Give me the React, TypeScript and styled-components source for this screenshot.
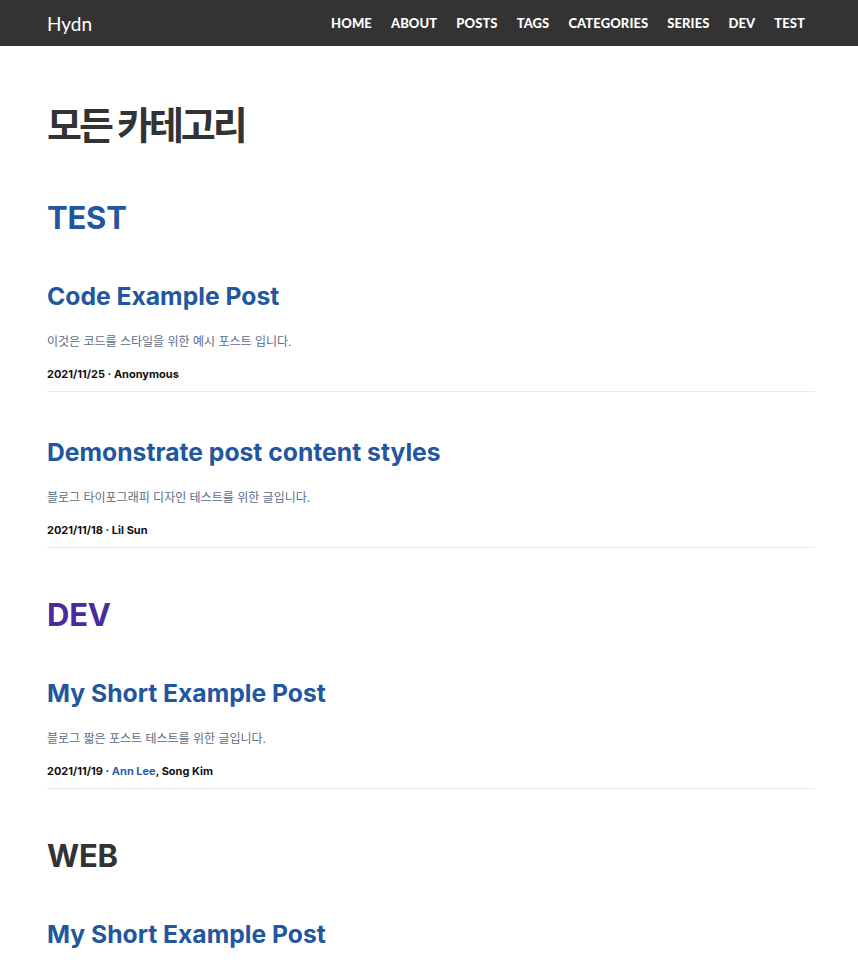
import React from "react";
import styled, { createGlobalStyle } from "styled-components";

const Global = createGlobalStyle`
  html, body { margin: 0; padding: 0; background: #fff; }
  body { font-family: Inter, "Noto Sans CJK KR", sans-serif; color: #333; }
  a { text-decoration: none; color: inherit; }
`;

const NavBar = styled.header`
  height: 46px;
  background: #333333;
  display: flex;
  align-items: center;
  justify-content: space-between;
  padding: 0 53px 0 47px;
`;

const Logo = styled.a`
  font-family: Lato, sans-serif;
  font-size: 19px;
  color: #fff;
  letter-spacing: 0;
`;

const NavLinks = styled.nav`
  display: flex;
  gap: 19px;
`;

const NavLink = styled.a`
  font-family: Lato, sans-serif;
  font-weight: 900;
  font-size: 13px;
  color: #fff;
  text-transform: uppercase;
  letter-spacing: 0.1px;
`;

const Main = styled.main`
  width: 768px;
  margin-left: 47px;
  padding-top: 57px;
`;

const PageTitle = styled.h1`
  margin: 0 0 48px;
  font-size: 38px;
  font-weight: 700;
  letter-spacing: -3px;
  line-height: 1.2;
  color: #333;
`;

const CategorySection = styled.section`
  margin-bottom: 46px;
`;

const CategoryTitle = styled.h2<{ $color: string }>`
  margin: 0 0 42px;
  font-size: 31px;
  font-weight: 700;
  line-height: 41px;
  letter-spacing: -0.2px;
  color: ${(p) => p.$color};
`;

const PostItem = styled.article`
  border-bottom: 1px solid #eaeaea;
  padding-bottom: 9px;
  & + & { margin-top: 44px; }
`;

const PostTitle = styled.h3`
  margin: 0 0 21px;
  font-size: 24.7px;
  font-weight: 700;
  line-height: 32px;
  color: #22569e;
`;

const PostDesc = styled.p`
  margin: 0 0 15px;
  font-size: 12px;
  line-height: 18px;
  color: #5b6b88;
`;

const Meta = styled.div`
  font-size: 11px;
  font-weight: 700;
  color: #111;
  line-height: 16px;
`;

const AuthorLink = styled.a`
  color: #2f5da6;
`;

type Post = {
  title: string;
  desc: string;
  date: string;
  authors: { name: string; link?: boolean }[];
};

const categories: { name: string; color: string; posts: Post[] }[] = [
  {
    name: "TEST",
    color: "#22569e",
    posts: [
      {
        title: "Code Example Post",
        desc: "이것은 코드를 스타일을 위한 예시 포스트 입니다.",
        date: "2021/11/25",
        authors: [{ name: "Anonymous" }],
      },
      {
        title: "Demonstrate post content styles",
        desc: "블로그 타이포그래피 디자인 테스트를 위한 글입니다.",
        date: "2021/11/18",
        authors: [{ name: "Lil Sun" }],
      },
    ],
  },
  {
    name: "DEV",
    color: "#4a2a9c",
    posts: [
      {
        title: "My Short Example Post",
        desc: "블로그 짧은 포스트 테스트를 위한 글입니다.",
        date: "2021/11/19",
        authors: [{ name: "Ann Lee", link: true }, { name: "Song Kim" }],
      },
    ],
  },
  {
    name: "WEB",
    color: "#333333",
    posts: [
      {
        title: "My Short Example Post",
        desc: "블로그 짧은 포스트 테스트를 위한 글입니다.",
        date: "2021/11/19",
        authors: [{ name: "Ann Lee", link: true }, { name: "Song Kim" }],
      },
    ],
  },
];

const navItems = ["Home", "About", "Posts", "Tags", "Categories", "Series", "Dev", "Test"];

export default function App() {
  return (
    <>
      <Global />
      <NavBar>
        <Logo href="#">Hydn</Logo>
        <NavLinks>
          {navItems.map((n) => (
            <NavLink key={n} href="#">
              {n}
            </NavLink>
          ))}
        </NavLinks>
      </NavBar>
      <Main>
        <PageTitle>모든 카테고리</PageTitle>
        {categories.map((c) => (
          <CategorySection key={c.name}>
            <CategoryTitle $color={c.color}>{c.name}</CategoryTitle>
            {c.posts.map((p, i) => (
              <PostItem key={i}>
                <PostTitle>{p.title}</PostTitle>
                <PostDesc>{p.desc}</PostDesc>
                <Meta>
                  {p.date} ·{" "}
                  {p.authors.map((a, j) => (
                    <React.Fragment key={a.name}>
                      {j > 0 && ", "}
                      {a.link ? <AuthorLink href="#">{a.name}</AuthorLink> : a.name}
                    </React.Fragment>
                  ))}
                </Meta>
              </PostItem>
            ))}
          </CategorySection>
        ))}
      </Main>
    </>
  );
}
